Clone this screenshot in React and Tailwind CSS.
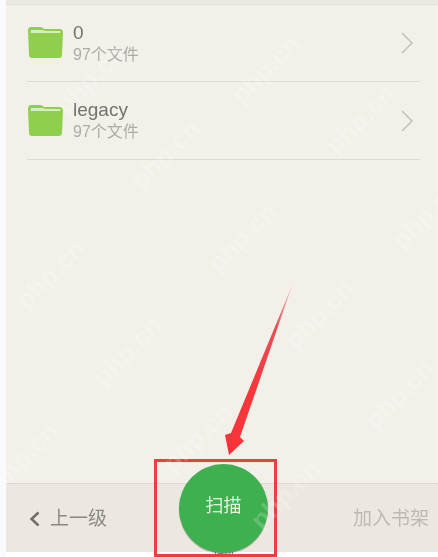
const FONT = "font-['Liberation_Sans','Noto_Sans_CJK_SC',sans-serif]";

const folders = [
    { name: "0", count: "97个文件" },
    { name: "legacy", count: "97个文件" },
];

// centres of the faint diagonal watermarks
const marks = [
    [50, 270], [127, 347], [23, 453], [197, 433], [165, 150], [242, 233], [319, 310],
    [399, 390], [426, 210], [360, 115], [285, 490], [90, 75], [265, 65],
];

function Folder() {
    return (
        <svg width="37" height="34" viewBox="0 0 37 34" className="shrink-0">
            <path d="M1 5 C1 2 2 1 4 1 L13 1 C15 1 16 2 17 3 L32 3 C35 3 36 4 36 7 L35 28 C35 31 34 32 31 32 L5 32 C3 32 2 31 2 28 Z" fill="#90cf4e" />
            <path d="M4 4 L16 4 L18 5 L33 5 L33.5 7 L3.5 7 Z" fill="#d6eebd" />
        </svg>
    );
}

function FolderRow({ name, count }) {
    return (
        <div className="flex h-[77px] items-center border-b border-[#dedbd4] last:h-[78px]">
            <Folder />
            <div className="ml-[9px] flex flex-1 flex-col">
                <span className="text-[19px] leading-[21px] text-[#74726e]">{name}</span>
                <span className="mt-[1px] text-[16px] leading-[21px] text-[#aeaca7]">{count}</span>
            </div>
            <svg width="14" height="22" viewBox="0 0 14 22" fill="none" stroke="#c4c2bd" strokeWidth="1.6" className="mr-[6px]">
                <path d="M2 1 L12 11 L2 21" />
            </svg>
        </div>
    );
}

export default function App() {
    return (
        <div className={`${FONT} relative flex h-[557px] w-[438px] flex-col overflow-hidden bg-[#f9fafe] pl-[6px] blur-[0.5px]`}>
            <div className="flex flex-1 flex-col bg-[#f3f0ea]">
                <div className="h-[5px] border-b border-[#e2dfd8] bg-[#ece9e3]" />
                <div className="pr-[18px] pl-[21px]">
                    {folders.map((f) => (
                        <FolderRow key={f.name} name={f.name} count={f.count} />
                    ))}
                </div>
            </div>

            <div className="flex h-[69px] items-center justify-between border-t border-[#dcd8d0] bg-[#ece8e1] pr-[9px] pl-[23px]">
                <div className="flex items-center gap-[10px] pt-[2px]">
                    <svg width="11" height="16" viewBox="0 0 11 16" fill="none" stroke="#6f6d69" strokeWidth="2.4">
                        <path d="M9.5 1.5 L2.5 8 L9.5 14.5" />
                    </svg>
                    <span className="text-[19px] text-[#8b8984]">上一级</span>
                </div>
                <span className="pt-[2px] text-[19px] text-[#bcbab5]">加入书架</span>
            </div>
            <div className="h-[5px] bg-white" />

            {/* label under the button, cropped by the page edge */}
            <span className="absolute top-[550px] left-[213px] text-[11px] text-[#77756f]">扫描</span>

            {/* scan button over the bar */}
            <div className="absolute top-[464px] left-[179px] flex h-[89px] w-[89px] items-center justify-center rounded-full bg-[#3fb04f] pb-[4px] text-[18px] text-[#e6f5df] shadow-[0_1px_1px_rgba(60,80,50,0.5)]">
                扫描
            </div>

            {/* annotation */}
            <div className="absolute top-[459px] left-[154px] h-[98px] w-[123px] border-[3px] border-[#e8403f]" />
            <svg width="80" height="180" viewBox="0 0 80 180" className="absolute top-[278px] left-[220px]">
                <defs>
                    <linearGradient id="arrowFade" x1="1" y1="0" x2="0" y2="1">
                        <stop offset="0" stopColor="#f3d0ca" />
                        <stop offset="0.25" stopColor="#e2535a" />
                        <stop offset="0.55" stopColor="#f7383d" />
                        <stop offset="1" stopColor="#f8333a" />
                    </linearGradient>
                </defs>
                <path d="M73 5 L20 159 L24 163 L9 177 L5 157 L11 155 Z" fill="url(#arrowFade)" />
            </svg>

            {marks.map(([x, y]) => (
                <span
                    key={`${x}-${y}`}
                    style={{ left: x - 42, top: y - 15 }}
                    className="absolute -rotate-45 text-[26px] font-bold text-white/20"
                >
                    php.cn
                </span>
            ))}
        </div>
    );
}
